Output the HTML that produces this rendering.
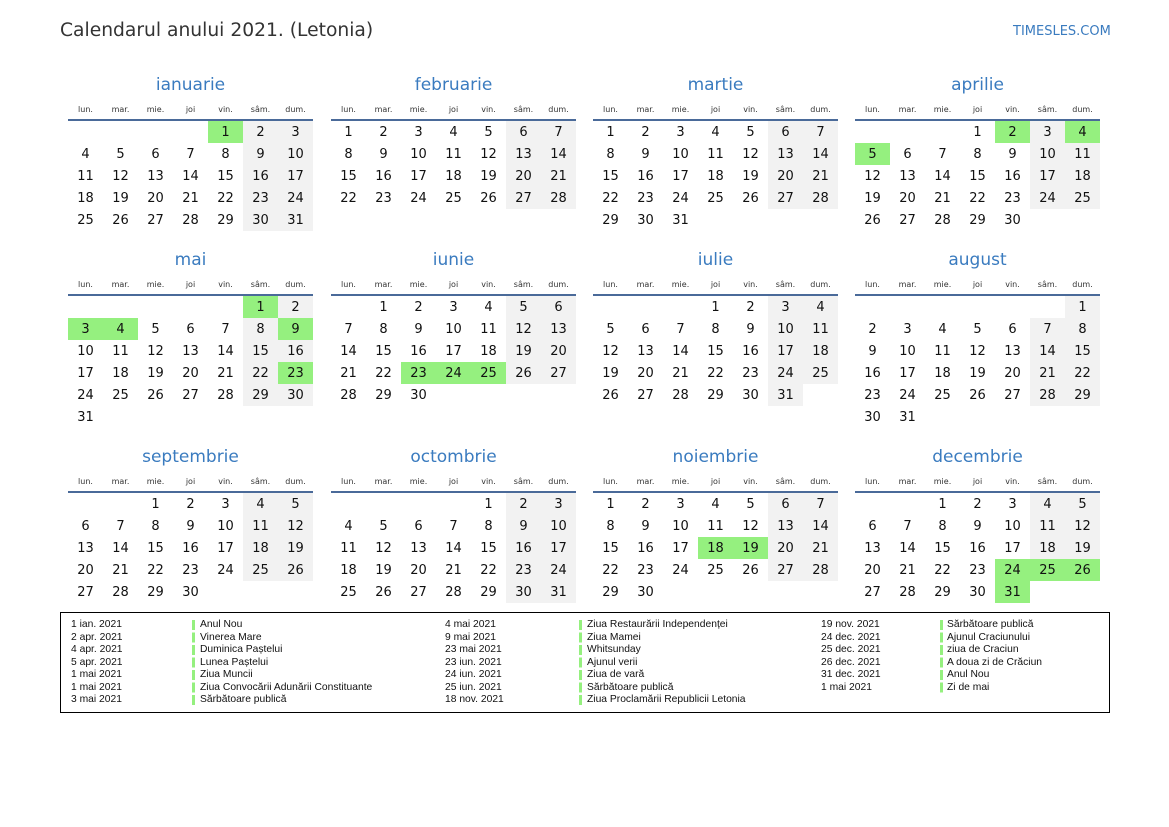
<!DOCTYPE html>
<html><head><meta charset="utf-8"><style>
body{margin:0;width:1169px;height:827px;background:#fff;position:relative;font-family:"DejaVu Sans","Liberation Sans",sans-serif;overflow:hidden}
.t{position:absolute;left:60px;top:20px;font-size:18.7px;color:#333}
.logo{position:absolute;left:1013px;top:24px;font-size:13px;color:#3a7bbf}
.m{position:absolute;width:245px}
.mt{height:30px;line-height:30px;text-align:center;font-size:17px;color:#3a7bbf}
.hd{position:absolute;top:32px;left:0;width:245px;display:flex;font-size:8px;color:#333;line-height:16px}
.hd span{width:35px;text-align:center}
.ln{position:absolute;top:49px;left:0;width:245px;height:2px;background:#4a6a99}
table{position:absolute;top:51px;left:0;border-collapse:collapse}
td{width:35px;height:22px;padding:0;text-align:center;font-size:13px;color:#111}
td.w{background:#f2f2f2}
td.h{background:#95f07f}
.lg{position:absolute;left:60px;top:612px;width:1048px;height:99px;border:1px solid #000;font-family:"Liberation Sans",sans-serif;font-size:10.3px;color:#111}
.c{position:absolute;top:6px;line-height:12.5px;white-space:nowrap}
.b{position:absolute;top:7px;width:3px;height:86px;background:repeating-linear-gradient(#95f07f 0 10px,transparent 10px 12.5px)}
</style></head><body>
<div class="t">Calendarul anului 2021. (Letonia)</div>
<div class="logo">TIMESLES.COM</div>

<div class="m" style="left:68px;top:70px"><div class="mt">ianuarie</div><div class="hd"><span>lun.</span><span>mar.</span><span>mie.</span><span>joi</span><span>vin.</span><span>sâm.</span><span>dum.</span></div><div class="ln"></div>
<table><tr><td></td><td></td><td></td><td></td><td class="h">1</td><td class="w">2</td><td class="w">3</td></tr>
<tr><td>4</td><td>5</td><td>6</td><td>7</td><td>8</td><td class="w">9</td><td class="w">10</td></tr>
<tr><td>11</td><td>12</td><td>13</td><td>14</td><td>15</td><td class="w">16</td><td class="w">17</td></tr>
<tr><td>18</td><td>19</td><td>20</td><td>21</td><td>22</td><td class="w">23</td><td class="w">24</td></tr>
<tr><td>25</td><td>26</td><td>27</td><td>28</td><td>29</td><td class="w">30</td><td class="w">31</td></tr></table></div>

<div class="m" style="left:331px;top:70px"><div class="mt">februarie</div><div class="hd"><span>lun.</span><span>mar.</span><span>mie.</span><span>joi</span><span>vin.</span><span>sâm.</span><span>dum.</span></div><div class="ln"></div>
<table><tr><td>1</td><td>2</td><td>3</td><td>4</td><td>5</td><td class="w">6</td><td class="w">7</td></tr>
<tr><td>8</td><td>9</td><td>10</td><td>11</td><td>12</td><td class="w">13</td><td class="w">14</td></tr>
<tr><td>15</td><td>16</td><td>17</td><td>18</td><td>19</td><td class="w">20</td><td class="w">21</td></tr>
<tr><td>22</td><td>23</td><td>24</td><td>25</td><td>26</td><td class="w">27</td><td class="w">28</td></tr></table></div>

<div class="m" style="left:593px;top:70px"><div class="mt">martie</div><div class="hd"><span>lun.</span><span>mar.</span><span>mie.</span><span>joi</span><span>vin.</span><span>sâm.</span><span>dum.</span></div><div class="ln"></div>
<table><tr><td>1</td><td>2</td><td>3</td><td>4</td><td>5</td><td class="w">6</td><td class="w">7</td></tr>
<tr><td>8</td><td>9</td><td>10</td><td>11</td><td>12</td><td class="w">13</td><td class="w">14</td></tr>
<tr><td>15</td><td>16</td><td>17</td><td>18</td><td>19</td><td class="w">20</td><td class="w">21</td></tr>
<tr><td>22</td><td>23</td><td>24</td><td>25</td><td>26</td><td class="w">27</td><td class="w">28</td></tr>
<tr><td>29</td><td>30</td><td>31</td><td></td><td></td><td></td><td></td></tr></table></div>

<div class="m" style="left:855px;top:70px"><div class="mt">aprilie</div><div class="hd"><span>lun.</span><span>mar.</span><span>mie.</span><span>joi</span><span>vin.</span><span>sâm.</span><span>dum.</span></div><div class="ln"></div>
<table><tr><td></td><td></td><td></td><td>1</td><td class="h">2</td><td class="w">3</td><td class="h">4</td></tr>
<tr><td class="h">5</td><td>6</td><td>7</td><td>8</td><td>9</td><td class="w">10</td><td class="w">11</td></tr>
<tr><td>12</td><td>13</td><td>14</td><td>15</td><td>16</td><td class="w">17</td><td class="w">18</td></tr>
<tr><td>19</td><td>20</td><td>21</td><td>22</td><td>23</td><td class="w">24</td><td class="w">25</td></tr>
<tr><td>26</td><td>27</td><td>28</td><td>29</td><td>30</td><td></td><td></td></tr></table></div>

<div class="m" style="left:68px;top:245px"><div class="mt">mai</div><div class="hd"><span>lun.</span><span>mar.</span><span>mie.</span><span>joi</span><span>vin.</span><span>sâm.</span><span>dum.</span></div><div class="ln"></div>
<table><tr><td></td><td></td><td></td><td></td><td></td><td class="h">1</td><td class="w">2</td></tr>
<tr><td class="h">3</td><td class="h">4</td><td>5</td><td>6</td><td>7</td><td class="w">8</td><td class="h">9</td></tr>
<tr><td>10</td><td>11</td><td>12</td><td>13</td><td>14</td><td class="w">15</td><td class="w">16</td></tr>
<tr><td>17</td><td>18</td><td>19</td><td>20</td><td>21</td><td class="w">22</td><td class="h">23</td></tr>
<tr><td>24</td><td>25</td><td>26</td><td>27</td><td>28</td><td class="w">29</td><td class="w">30</td></tr>
<tr><td>31</td><td></td><td></td><td></td><td></td><td></td><td></td></tr></table></div>

<div class="m" style="left:331px;top:245px"><div class="mt">iunie</div><div class="hd"><span>lun.</span><span>mar.</span><span>mie.</span><span>joi</span><span>vin.</span><span>sâm.</span><span>dum.</span></div><div class="ln"></div>
<table><tr><td></td><td>1</td><td>2</td><td>3</td><td>4</td><td class="w">5</td><td class="w">6</td></tr>
<tr><td>7</td><td>8</td><td>9</td><td>10</td><td>11</td><td class="w">12</td><td class="w">13</td></tr>
<tr><td>14</td><td>15</td><td>16</td><td>17</td><td>18</td><td class="w">19</td><td class="w">20</td></tr>
<tr><td>21</td><td>22</td><td class="h">23</td><td class="h">24</td><td class="h">25</td><td class="w">26</td><td class="w">27</td></tr>
<tr><td>28</td><td>29</td><td>30</td><td></td><td></td><td></td><td></td></tr></table></div>

<div class="m" style="left:593px;top:245px"><div class="mt">iulie</div><div class="hd"><span>lun.</span><span>mar.</span><span>mie.</span><span>joi</span><span>vin.</span><span>sâm.</span><span>dum.</span></div><div class="ln"></div>
<table><tr><td></td><td></td><td></td><td>1</td><td>2</td><td class="w">3</td><td class="w">4</td></tr>
<tr><td>5</td><td>6</td><td>7</td><td>8</td><td>9</td><td class="w">10</td><td class="w">11</td></tr>
<tr><td>12</td><td>13</td><td>14</td><td>15</td><td>16</td><td class="w">17</td><td class="w">18</td></tr>
<tr><td>19</td><td>20</td><td>21</td><td>22</td><td>23</td><td class="w">24</td><td class="w">25</td></tr>
<tr><td>26</td><td>27</td><td>28</td><td>29</td><td>30</td><td class="w">31</td><td></td></tr></table></div>

<div class="m" style="left:855px;top:245px"><div class="mt">august</div><div class="hd"><span>lun.</span><span>mar.</span><span>mie.</span><span>joi</span><span>vin.</span><span>sâm.</span><span>dum.</span></div><div class="ln"></div>
<table><tr><td></td><td></td><td></td><td></td><td></td><td></td><td class="w">1</td></tr>
<tr><td>2</td><td>3</td><td>4</td><td>5</td><td>6</td><td class="w">7</td><td class="w">8</td></tr>
<tr><td>9</td><td>10</td><td>11</td><td>12</td><td>13</td><td class="w">14</td><td class="w">15</td></tr>
<tr><td>16</td><td>17</td><td>18</td><td>19</td><td>20</td><td class="w">21</td><td class="w">22</td></tr>
<tr><td>23</td><td>24</td><td>25</td><td>26</td><td>27</td><td class="w">28</td><td class="w">29</td></tr>
<tr><td>30</td><td>31</td><td></td><td></td><td></td><td></td><td></td></tr></table></div>

<div class="m" style="left:68px;top:442px"><div class="mt">septembrie</div><div class="hd"><span>lun.</span><span>mar.</span><span>mie.</span><span>joi</span><span>vin.</span><span>sâm.</span><span>dum.</span></div><div class="ln"></div>
<table><tr><td></td><td></td><td>1</td><td>2</td><td>3</td><td class="w">4</td><td class="w">5</td></tr>
<tr><td>6</td><td>7</td><td>8</td><td>9</td><td>10</td><td class="w">11</td><td class="w">12</td></tr>
<tr><td>13</td><td>14</td><td>15</td><td>16</td><td>17</td><td class="w">18</td><td class="w">19</td></tr>
<tr><td>20</td><td>21</td><td>22</td><td>23</td><td>24</td><td class="w">25</td><td class="w">26</td></tr>
<tr><td>27</td><td>28</td><td>29</td><td>30</td><td></td><td></td><td></td></tr></table></div>

<div class="m" style="left:331px;top:442px"><div class="mt">octombrie</div><div class="hd"><span>lun.</span><span>mar.</span><span>mie.</span><span>joi</span><span>vin.</span><span>sâm.</span><span>dum.</span></div><div class="ln"></div>
<table><tr><td></td><td></td><td></td><td></td><td>1</td><td class="w">2</td><td class="w">3</td></tr>
<tr><td>4</td><td>5</td><td>6</td><td>7</td><td>8</td><td class="w">9</td><td class="w">10</td></tr>
<tr><td>11</td><td>12</td><td>13</td><td>14</td><td>15</td><td class="w">16</td><td class="w">17</td></tr>
<tr><td>18</td><td>19</td><td>20</td><td>21</td><td>22</td><td class="w">23</td><td class="w">24</td></tr>
<tr><td>25</td><td>26</td><td>27</td><td>28</td><td>29</td><td class="w">30</td><td class="w">31</td></tr></table></div>

<div class="m" style="left:593px;top:442px"><div class="mt">noiembrie</div><div class="hd"><span>lun.</span><span>mar.</span><span>mie.</span><span>joi</span><span>vin.</span><span>sâm.</span><span>dum.</span></div><div class="ln"></div>
<table><tr><td>1</td><td>2</td><td>3</td><td>4</td><td>5</td><td class="w">6</td><td class="w">7</td></tr>
<tr><td>8</td><td>9</td><td>10</td><td>11</td><td>12</td><td class="w">13</td><td class="w">14</td></tr>
<tr><td>15</td><td>16</td><td>17</td><td class="h">18</td><td class="h">19</td><td class="w">20</td><td class="w">21</td></tr>
<tr><td>22</td><td>23</td><td>24</td><td>25</td><td>26</td><td class="w">27</td><td class="w">28</td></tr>
<tr><td>29</td><td>30</td><td></td><td></td><td></td><td></td><td></td></tr></table></div>

<div class="m" style="left:855px;top:442px"><div class="mt">decembrie</div><div class="hd"><span>lun.</span><span>mar.</span><span>mie.</span><span>joi</span><span>vin.</span><span>sâm.</span><span>dum.</span></div><div class="ln"></div>
<table><tr><td></td><td></td><td>1</td><td>2</td><td>3</td><td class="w">4</td><td class="w">5</td></tr>
<tr><td>6</td><td>7</td><td>8</td><td>9</td><td>10</td><td class="w">11</td><td class="w">12</td></tr>
<tr><td>13</td><td>14</td><td>15</td><td>16</td><td>17</td><td class="w">18</td><td class="w">19</td></tr>
<tr><td>20</td><td>21</td><td>22</td><td>23</td><td class="h">24</td><td class="h">25</td><td class="h">26</td></tr>
<tr><td>27</td><td>28</td><td>29</td><td>30</td><td class="h">31</td><td></td><td></td></tr></table></div>

<div class="lg">
<div class="c" style="left:10px">1 ian. 2021<br>2 apr. 2021<br>4 apr. 2021<br>5 apr. 2021<br>1 mai 2021<br>1 mai 2021<br>3 mai 2021</div>
<div class="b" style="left:131px"></div>
<div class="c" style="left:139px">Anul Nou<br>Vinerea Mare<br>Duminica Paștelui<br>Lunea Paștelui<br>Ziua Muncii<br>Ziua Convocării Adunării Constituante<br>Sărbătoare publică</div>
<div class="c" style="left:384px">4 mai 2021<br>9 mai 2021<br>23 mai 2021<br>23 iun. 2021<br>24 iun. 2021<br>25 iun. 2021<br>18 nov. 2021</div>
<div class="b" style="left:518px"></div>
<div class="c" style="left:526px">Ziua Restaurării Independenței<br>Ziua Mamei<br>Whitsunday<br>Ajunul verii<br>Ziua de vară<br>Sărbătoare publică<br>Ziua Proclamării Republicii Letonia</div>
<div class="c" style="left:760px">19 nov. 2021<br>24 dec. 2021<br>25 dec. 2021<br>26 dec. 2021<br>31 dec. 2021<br>1 mai 2021</div>
<div class="b" style="left:879px;height:73px"></div>
<div class="c" style="left:886px">Sărbătoare publică<br>Ajunul Craciunului<br>ziua de Craciun<br>A doua zi de Crăciun<br>Anul Nou<br>Zi de mai</div>
</div>
</body></html>
